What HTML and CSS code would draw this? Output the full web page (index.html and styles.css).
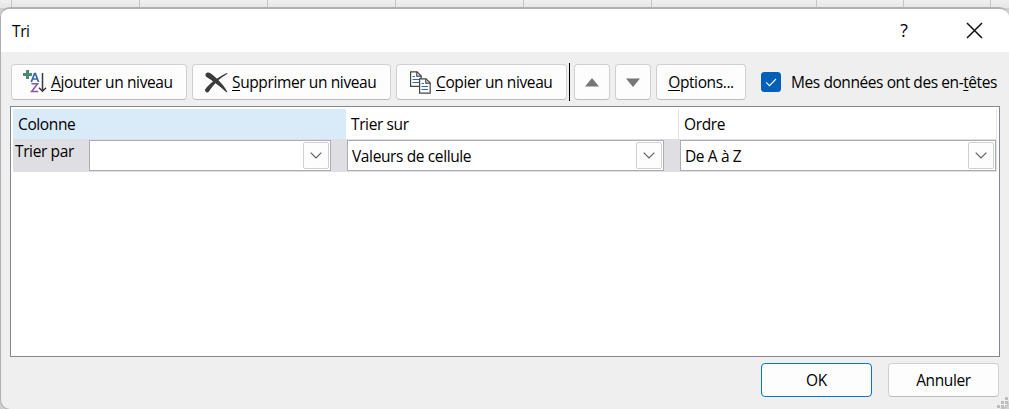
FILE: index.html
```html
<!DOCTYPE html>
<html lang="fr">
<head>
<meta charset="utf-8">
<title>Tri</title>
<link rel="stylesheet" href="styles.css">
</head>
<body>
<main class="dialog">
  <header class="titlebar">
    <h1 class="title">Tri</h1>
    <span class="help">?</span>
    <svg class="close" width="17" height="17" viewBox="0 0 17 17"><path d="M1 1L16 16M16 1L1 16" fill="none" stroke="#111" stroke-width="1.5"/></svg>
  </header>
  <section class="toolbar">
    <button class="btn add">
      <svg width="24" height="24" viewBox="0 0 24 24" fill="none">
        <path d="M0 4.5H9M4.5 0V9" stroke="#4a8a73" stroke-width="3"/>
        <path d="M8.3 12L11.5 3.7H12.4L15.6 12M9.5 9H14.4" stroke="#3769a8" stroke-width="1.7"/>
        <path d="M8.5 13.8H14.6L8.6 21.5H15.2" stroke="#8a57ae" stroke-width="1.5"/>
        <path d="M19.5 3V21M16 17.7L19.5 21.2L23 17.7" stroke="#3b3b3b" stroke-width="1.5"/>
      </svg>
      <span><u>A</u>jouter un niveau</span>
    </button>
    <button class="btn remove">
      <svg width="23" height="21" viewBox="0 0 23 21" fill="#3b3b3b">
        <path d="M.4 2.2C1.6 0 4 .2 5.8 1.5C10 4.5 18 11.5 22.3 19.7L21.3 20.3C15.5 14.8 8 8.8 .8 4.5Z"/>
        <path d="M22.5 1.8L21.8 1C14 4.5 4 11.5 .1 17.6C-.2 20.3 2.2 21.4 3.8 19.7C8.5 12.5 15 6 22.5 1.8Z"/>
      </svg>
      <span><u>S</u>upprimer un niveau</span>
    </button>
    <button class="btn copy">
      <svg width="21" height="23" viewBox="0 0 21 23" fill="#fff" stroke="#444" stroke-width="1.2">
        <path d="M.6 .8H7L11.2 5V15.3H.6Z"/><path d="M6.8 .8V5.2H11.2" fill="none"/>
        <path d="M2.5 5.5H5M2.5 8.5H9M2.5 11.5H9" stroke="#3769a8"/>
        <path d="M9.6 7.8H16L20.2 12V22.2H9.6Z"/><path d="M15.8 7.8V12.2H20.2" fill="none"/>
        <path d="M11.5 12.5H14M11.5 15.5H18M11.5 18.5H18" stroke="#3769a8"/>
      </svg>
      <span><u>C</u>opier un niveau</span>
    </button>
    <i class="divider"></i>
    <button class="btn arrow up"><svg width="14" height="9" viewBox="0 0 14 9"><path d="M7 0L14 8.5H0Z" fill="#777"/></svg></button>
    <button class="btn arrow down"><svg width="14" height="9" viewBox="0 0 14 9"><path d="M0 .5H14L7 9Z" fill="#777"/></svg></button>
    <button class="btn options"><span><u>O</u>ptions...</span></button>
    <label class="headers">
      <svg width="20" height="20" viewBox="0 0 20 20"><rect width="20" height="20" rx="3.5" fill="#005fb8"/><path d="M5.2 10.3L8.5 13.6L15 7" fill="none" stroke="#fff" stroke-width="1.1"/></svg>
      <span>Mes données ont des en-<u>t</u>êtes</span>
    </label>
  </section>
  <section class="list">
    <div class="heads">
      <div class="head selected">Colonne</div>
      <div class="head">Trier sur</div>
      <div class="head">Ordre</div>
    </div>
    <div class="row">
      <div class="cell">
        <span class="rowlabel">Trier par</span>
        <div class="combo"><span></span><i class="drop"><svg width="12" height="7" viewBox="0 0 12 7"><path d="M.7 .7L6 6L11.3 .7"/></svg></i></div>
      </div>
      <div class="combo"><span>Valeurs de cellule</span><i class="drop"><svg width="12" height="7" viewBox="0 0 12 7"><path d="M.7 .7L6 6L11.3 .7"/></svg></i></div>
      <div class="combo"><span>De A à Z</span><i class="drop"><svg width="12" height="7" viewBox="0 0 12 7"><path d="M.7 .7L6 6L11.3 .7"/></svg></i></div>
    </div>
  </section>
  <footer class="actions">
    <button class="btn ok"><span>OK</span></button>
    <button class="btn cancel"><span>Annuler</span></button>
  </footer>
  <svg class="grip" width="11" height="11" viewBox="0 0 11 11"><path d="M8 0h3v3H8zM4 4h3v3H4zM8 4h3v3H8zM0 8h3v3H0zM4 8h3v3H4zM8 8h3v3H8z" fill="#bdbdbd"/></svg>
</main>
</body>
</html>
```

FILE: styles.css
```css
* { box-sizing: border-box; }
body {
  margin: 0;
  width: 1009px;
  height: 409px;
  padding-top: 7px;
  overflow: hidden;
  color: #000;
  font: 15.5px/20px "Open Sans", "Noto Sans", sans-serif;
  letter-spacing: -.38px;
  background:
    linear-gradient(#c6c6c6, #c6c6c6) 11px 0 / 1px 8px no-repeat,
    linear-gradient(#c6c6c6, #c6c6c6) 139px 0 / 1px 8px no-repeat,
    linear-gradient(#c6c6c6, #c6c6c6) 267px 0 / 1px 8px no-repeat,
    linear-gradient(#c6c6c6, #c6c6c6) 395px 0 / 1px 8px no-repeat,
    linear-gradient(#c6c6c6, #c6c6c6) 523px 0 / 1px 8px no-repeat,
    linear-gradient(#c6c6c6, #c6c6c6) 651px 0 / 1px 8px no-repeat,
    linear-gradient(#c6c6c6, #c6c6c6) 816px 0 / 1px 8px no-repeat,
    linear-gradient(#c6c6c6, #c6c6c6) 903px 0 / 1px 8px no-repeat,
    linear-gradient(#c6c6c6, #c6c6c6) 990px 0 / 1px 8px no-repeat,
    linear-gradient(#efefef, #e6e6e6) 0 0 / 100% 8px no-repeat,
    #d0d0d0;
}
.dialog {
  position: relative;
  height: 403px;
  border: 1px solid #b0b0b0;
  border-top-width: 2px;
  border-right-width: 0;
  border-radius: 10px;
  background: #efefef;
  overflow: hidden;
}
.titlebar {
  display: flex;
  align-items: center;
  height: 43px;
  padding: 0 26px 0 11px;
  background: #fff;
}
.title { flex: 1; margin: 0; font: inherit; }
.help { margin: -2px 58px 0 0; font-size: 18.5px; transform: scaleX(.95); }
.close { display: block; }
.toolbar { display: flex; align-items: center; height: 38px; margin: 11px 0 0 10px; }
.btn {
  display: flex;
  align-items: center;
  height: 36px;
  padding: 0;
  border: 1px solid #d0d0d0;
  border-bottom-color: #bcbcbc;
  border-radius: 4px;
  background: #fdfdfd;
  color: #000;
  font: inherit;
  letter-spacing: inherit;
  white-space: nowrap;
}
u { text-underline-offset: 2px; text-decoration-thickness: 1px; text-decoration-skip-ink: none; }
.add { width: 176px; padding-left: 11px; gap: 4px; margin-right: 5px; }
.remove { width: 199px; padding-left: 12px; gap: 4px; margin-right: 5px; }
.copy { width: 171px; padding-left: 13px; gap: 5px; }
.divider { width: 1px; height: 38px; margin: 0 4px 0 2px; background: #000; }
.arrow { width: 36px; justify-content: center; margin-right: 5px; }
.options { width: 90px; justify-content: center; }
.headers { display: flex; align-items: center; gap: 10px; margin-left: 15px; white-space: nowrap; letter-spacing: -.42px; }
.list {
  width: 990px;
  height: 251px;
  margin: 5px 0 0 9px;
  padding: 2px;
  border: 1px solid #828790;
  background: #fff;
}
.heads { display: grid; grid-template-columns: 333px 333px 318px; height: 30px; }
.head { padding: 5px 0 0 5px; border-right: 1px solid #e3e3e3; }
.head:nth-child(2) { border-color: #e3e3e3; }
.selected { background: #d9eaf8; border-color: #d9eaf8; }
.row {
  display: grid;
  grid-template-columns: 318px 317px 316px;
  column-gap: 16px;
  width: 984px;
  height: 33px;
  padding-top: 1px;
  background: #dfdee3;
}
.cell { display: grid; grid-template-columns: 76px 242px; }
.rowlabel { padding: 1px 0 0 2px; white-space: nowrap; }
.combo {
  display: flex;
  align-items: center;
  justify-content: space-between;
  height: 31px;
  padding: 0 1px 0 4px;
  border: 1px solid #abadb3;
  background: #fff;
}
.drop {
  display: flex;
  align-items: center;
  justify-content: center;
  width: 26px;
  height: 27px;
  border: 1px solid #d0d0d0;
  border-radius: 2px;
  background: #fdfdfd;
}
.drop svg { margin-right: 1px; }
.drop path { fill: none; stroke: #606060; stroke-width: 1.2; }
.actions { display: flex; gap: 16px; margin: 6px 0 0 760px; }
.actions .btn { width: 111px; height: 34px; justify-content: center; }
.actions .ok { border-color: #0078d4; }
.grip { position: absolute; right: 1px; bottom: 1px; }
```
